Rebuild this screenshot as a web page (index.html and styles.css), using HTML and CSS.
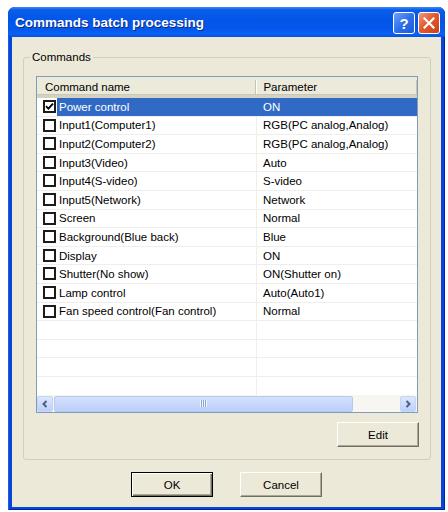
FILE: index.html
```html
<!DOCTYPE html>
<html>
<head>
<meta charset="utf-8">
<link rel="stylesheet" href="styles.css">
</head>
<body>
<div class="window">
  <div class="titlebar">
    <span class="title">Commands batch processing</span>
    <div class="tbtns">
      <div class="tbtn help">?</div>
      <div class="tbtn close">
        <svg width="12" height="12" viewBox="0 0 12 12"><path d="M1.5 1.5 L10.5 10.5 M10.5 1.5 L1.5 10.5" stroke="#fff" stroke-width="2.2" stroke-linecap="square"/></svg>
      </div>
    </div>
  </div>
  <div class="client">
    <div class="group">
      <span class="group-label">Commands</span>
      <div class="listbox">
        <div class="lheader">
          <div class="hcol hname">Command name</div>
          <div class="hcol hparam">Parameter</div>
          <div class="hrest"></div>
        </div>
        <div class="rows">
          <div class="row"><span class="cb checked"><svg width="9" height="9" viewBox="0 0 9 9"><path d="M1 4.2 L3.4 6.6 L8 1.6" stroke="#000" stroke-width="1.9" fill="none"/></svg></span><div class="cells sel"><span class="cname">Power control</span><span class="cparam">ON</span></div></div>
          <div class="row"><span class="cb"></span><div class="cells"><span class="cname">Input1(Computer1)</span><span class="cparam">RGB(PC analog,Analog)</span></div></div>
          <div class="row"><span class="cb"></span><div class="cells"><span class="cname">Input2(Computer2)</span><span class="cparam">RGB(PC analog,Analog)</span></div></div>
          <div class="row"><span class="cb"></span><div class="cells"><span class="cname">Input3(Video)</span><span class="cparam">Auto</span></div></div>
          <div class="row"><span class="cb"></span><div class="cells"><span class="cname">Input4(S-video)</span><span class="cparam">S-video</span></div></div>
          <div class="row"><span class="cb"></span><div class="cells"><span class="cname">Input5(Network)</span><span class="cparam">Network</span></div></div>
          <div class="row"><span class="cb"></span><div class="cells"><span class="cname">Screen</span><span class="cparam">Normal</span></div></div>
          <div class="row"><span class="cb"></span><div class="cells"><span class="cname">Background(Blue back)</span><span class="cparam">Blue</span></div></div>
          <div class="row"><span class="cb"></span><div class="cells"><span class="cname">Display</span><span class="cparam">ON</span></div></div>
          <div class="row"><span class="cb"></span><div class="cells"><span class="cname">Shutter(No show)</span><span class="cparam">ON(Shutter on)</span></div></div>
          <div class="row"><span class="cb"></span><div class="cells"><span class="cname">Lamp control</span><span class="cparam">Auto(Auto1)</span></div></div>
          <div class="row"><span class="cb"></span><div class="cells"><span class="cname">Fan speed control(Fan control)</span><span class="cparam">Normal</span></div></div>
          <div class="row empty"><span class="ecol1"></span><span class="ecol2"></span></div>
          <div class="row empty"><span class="ecol1"></span><span class="ecol2"></span></div>
          <div class="row empty"><span class="ecol1"></span><span class="ecol2"></span></div>
          <div class="row empty"><span class="ecol1"></span><span class="ecol2"></span></div>
        </div>
        <div class="hscroll">
          <div class="sbtn"><svg width="8" height="8" viewBox="0 0 8 8"><path d="M5.5 1 L2.5 4 L5.5 7" stroke="#4D6185" stroke-width="2" fill="none"/></svg></div>
          <div class="thumb"><span class="grip"></span></div>
          <div class="track"></div>
          <div class="sbtn"><svg width="8" height="8" viewBox="0 0 8 8"><path d="M2.5 1 L5.5 4 L2.5 7" stroke="#4D6185" stroke-width="2" fill="none"/></svg></div>
        </div>
      </div>
      <div class="editrow">
        <div class="btn">Edit</div>
      </div>
    </div>
    <div class="btnrow">
      <div class="btn default">OK</div>
      <div class="btn">Cancel</div>
    </div>
  </div>
</div>
</body>
</html>
```

FILE: styles.css
```css
* { box-sizing: border-box; }
html, body { margin: 0; padding: 0; background: #ffffff; }
body { font-family: "Liberation Sans", Arial, sans-serif; font-size: 11.5px; color: #000; }

.window {
  margin: 7px 0 0 8px;
  width: 437px;
  height: 503px;
  border-radius: 7px 7px 0 0;
  background: #0846D8;
  display: flex;
  flex-direction: column;
  padding: 0 4px 3px 4px;
  box-shadow: inset 1px 0 0 #1A5BE8, inset -1px 0 0 #0020B0, inset 0 -1px 0 #0020B0;
}
.titlebar {
  height: 30px;
  margin: 0 -4px;
  padding: 0 5px 0 7px;
  border-radius: 7px 7px 0 0;
  background: linear-gradient(to bottom, #3E8CF6 0%, #0A5CEA 10%, #0355E8 45%, #0558EC 75%, #0A62F4 90%, #0850DE 100%);
  display: flex;
  align-items: center;
  justify-content: space-between;
}
.title {
  color: #fff;
  font-weight: bold;
  font-size: 13.5px;
  text-shadow: 1px 1px 0 #0A2A86;
  margin-top: 1px;
}
.tbtns { display: flex; gap: 3px; margin-top: 2px; }
.tbtn {
  width: 22px;
  height: 22px;
  border: 1px solid #fff;
  border-radius: 3px;
  display: flex;
  align-items: center;
  justify-content: center;
  color: #fff;
  font-weight: bold;
  font-size: 15px;
}
.help { background: linear-gradient(135deg, #6FA2F8 0%, #2E6FEB 50%, #1F5AD8 100%); }
.close { background: linear-gradient(135deg, #F09A7A 0%, #E45A2E 45%, #C9401A 100%); }

.client {
  flex: 1;
  background: #ECE9D8;
  display: flex;
  flex-direction: column;
}

.group {
  position: relative;
  margin: 20px 10px 0 11px;
  border: 1px solid #D0D0BF;
  border-radius: 3px;
  padding: 18px 12px 12px 12px;
}
.group-label {
  position: absolute;
  top: -8px;
  left: 6px;
  padding: 0 2px;
  background: #ECE9D8;
  line-height: 14px;
}

.listbox {
  height: 337px;
  border: 1px solid #7F9DB9;
  background: #fff;
  display: flex;
  flex-direction: column;
  overflow: hidden;
}
.lheader {
  height: 21px;
  flex: none;
  display: flex;
  background: #EBEADB;
  border-bottom: 3px solid #D6D2C2;
  box-shadow: inset 0 -1px 0 #CBC7B8;
}
.hcol {
  display: flex;
  align-items: center;
  padding-top: 2px;
}
.hname { width: 220px; padding-left: 8px; position: relative; }
.hparam { width: 161px; padding-left: 7px; position: relative; }
.hname::after, .hparam::after {
  content: "";
  position: absolute;
  right: 0;
  top: 3px;
  bottom: 1px;
  width: 1px;
  background: #C7C5B2;
  box-shadow: 1px 0 0 #fff;
}
.hrest { flex: 1; }

.rows { height: 297px; flex: none; overflow: hidden; }
.row {
  height: 18.6px;
  display: flex;
  align-items: stretch;
  border-bottom: 1px solid #EFEEE8;
}
.cb {
  flex: none;
  width: 13px;
  height: 13px;
  margin: 2px 1px 0 6px;
  border: 2px solid #1C1C1C;
  background: #fff;
  display: flex;
  align-items: center;
  justify-content: center;
}
.cells { flex: 1; display: flex; }
.cells.sel { background: #316AC5; color: #fff; }
.cname {
  width: 200px;
  padding-left: 2px;
  display: flex;
  align-items: center;
  border-right: 1px solid #EFEEE8;
  white-space: nowrap;
}
.cells.sel .cname { border-right-color: #316AC5; }
.cparam {
  flex: 1;
  padding-left: 6px;
  display: flex;
  align-items: center;
  white-space: nowrap;
}
.ecol1 { width: 220px; border-right: 1px solid #EFEEE8; }
.ecol2 { flex: 1; }

.hscroll {
  height: 17px;
  flex: none;
  display: flex;
  align-items: center;
  background: #F7F6F1;
  padding-right: 1px;
}
.sbtn {
  width: 16px;
  height: 16px;
  flex: none;
  border: 1px solid #C4D4F6;
  border-radius: 2px;
  background: linear-gradient(to bottom, #DDE7FD, #BDD0F9);
  display: flex;
  align-items: center;
  justify-content: center;
}
.thumb {
  width: 299px;
  height: 16px;
  flex: none;
  margin-left: 1px;
  border: 1px solid #B5C9F3;
  border-radius: 2px;
  background: linear-gradient(to bottom, #D4E0FC, #BDD0FA);
  display: flex;
  align-items: center;
  justify-content: center;
}
.grip {
  width: 7px;
  height: 7px;
  background: repeating-linear-gradient(to right, #EEF4FE 0 1px, #8CA6DB 1px 2px);
}
.track { flex: 1; }

.editrow {
  display: flex;
  justify-content: flex-end;
  margin-top: 9px;
  margin-right: -1px;
}

.btn {
  width: 82px;
  height: 25px;
  display: flex;
  align-items: center;
  justify-content: center;
  background: #ECE9D8;
  border-top: 1px solid #fff;
  border-left: 1px solid #fff;
  border-right: 1px solid #716F64;
  border-bottom: 1px solid #716F64;
  box-shadow: inset -1px -1px 0 #ACA899;
}
.btn.default {
  border: 1px solid #000;
  box-shadow: inset 1px 1px 0 #fff, inset -1px -1px 0 #716F64, inset -2px -2px 0 #ACA899;
}

.btnrow {
  display: flex;
  justify-content: center;
  gap: 27px;
  margin-top: 12px;
}
```
